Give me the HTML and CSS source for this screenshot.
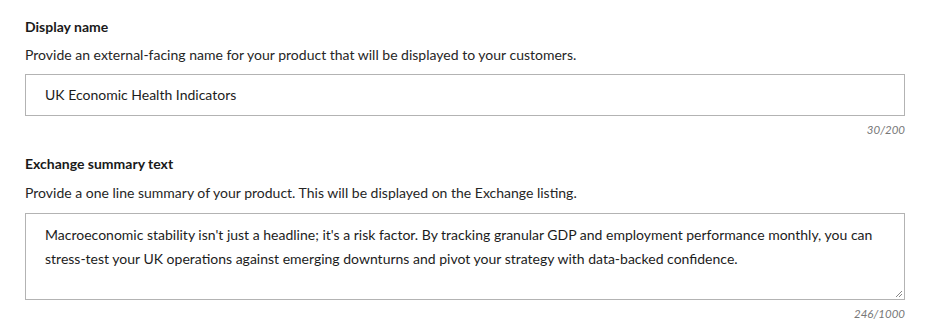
FILE: index.html
```
<!DOCTYPE html>
<html>
<head>
<meta charset="utf-8">
<link rel="stylesheet" href="styles.css">
</head>
<body>
<div class="form">
  <div class="field">
    <div class="label">Display name</div>
    <div class="desc">Provide an external-facing name for your product that will be displayed to your customers.</div>
    <div class="input">UK Economic Health Indicators</div>
    <div class="count">30/200</div>
  </div>
  <div class="field">
    <div class="label">Exchange summary text</div>
    <div class="desc">Provide a one line summary of your product. This will be displayed on the Exchange listing.</div>
    <div class="textarea">Macroeconomic stability isn't just a headline; it's a risk factor. By tracking granular GDP and employment performance monthly, you can stress-test your UK operations against emerging downturns and pivot your strategy with data-backed confidence.
      <svg class="grip" width="8" height="8" viewBox="0 0 8 8"><path d="M7 1L1 7M7 4L4 7" stroke="#888" stroke-width="1"/></svg>
    </div>
    <div class="count">246/1000</div>
  </div>
</div>
</body>
</html>
```
FILE: styles.css
```
body {
  margin: 0;
  background: #fff;
  font-family: Lato, "Open Sans", sans-serif;
  color: #1c1c1c;
}
.form {
  padding: 18px 44px 0 25px;
  display: flex;
  flex-direction: column;
  gap: 18px;
}
.field {
  display: flex;
  flex-direction: column;
}
.label {
  font-size: 14px;
  font-weight: 700;
  line-height: 18px;
  color: #1a1a1a;
}
.desc {
  font-size: 14px;
  line-height: 20px;
  margin-top: 10px;
  color: #262626;
}
.field:first-child .desc {
  margin-top: 9px;
}
.input {
  margin-top: 9px;
  height: 40px;
  border: 1px solid #b3b3b3;
  box-sizing: content-box;
  padding: 0 19px;
  font-size: 14px;
  line-height: 40px;
  color: #1c1c1c;
}
.textarea {
  position: relative;
  margin-top: 10px;
  border: 1px solid #b3b3b3;
  box-sizing: border-box;
  height: 87px;
  padding: 9px 19px;
  font-size: 14px;
  line-height: 24px;
  color: #1c1c1c;
}
.grip {
  position: absolute;
  right: 1px;
  bottom: 1px;
}
.count {
  text-align: right;
  font-size: 11.5px;
  font-style: italic;
  color: #777;
  line-height: 14px;
  margin-top: 7px;
}
```
